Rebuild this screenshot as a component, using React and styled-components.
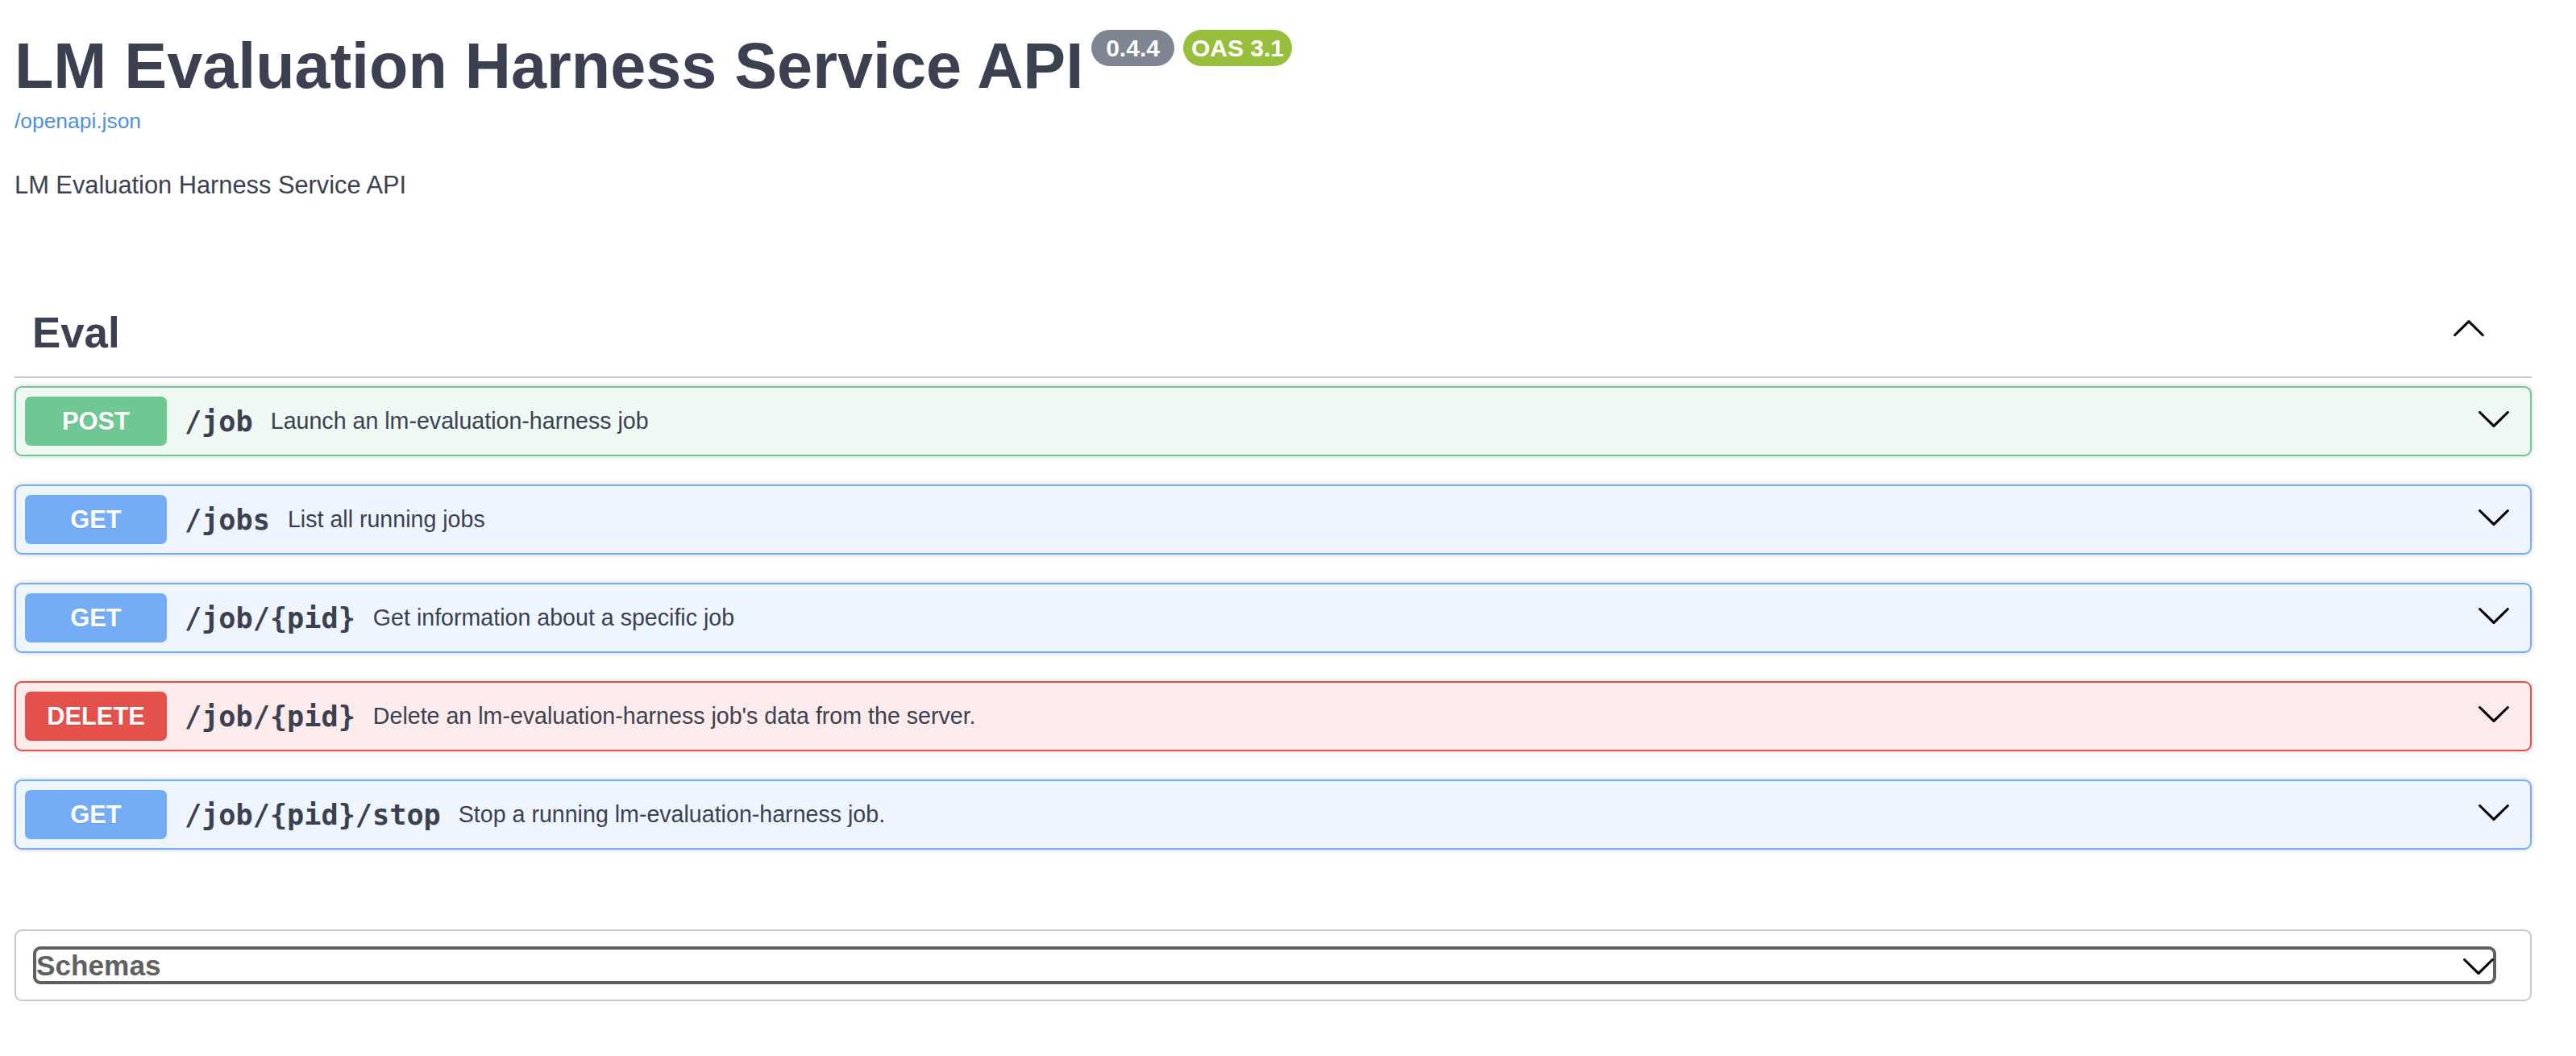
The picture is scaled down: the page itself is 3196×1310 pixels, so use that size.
import React from 'react';
import styled, { createGlobalStyle } from 'styled-components';

// page-wide reset
const GlobalStyle = createGlobalStyle`
  html, body {
    margin: 0;
    padding: 0;
    background: #ffffff;
  }
  body {
    font-family: "Liberation Sans", Arial, Helvetica, sans-serif;
    color: #3b4151;
  }
`;

const METHODS = {
  post: { badge: '#6fc894', border: '#6fc894', bg: '#eff8f3' },
  get: { badge: '#74acf6', border: '#74acf6', bg: '#eff5fe' },
  delete: { badge: '#e4504a', border: '#e4504a', bg: '#fbebea' },
};

// styling
const Page = styled.div`
  width: 3123px;
  padding: 36px 0 60px 18px;
`;
const Info = styled.div`
  display: flex;
  flex-direction: column;
  align-items: flex-start;
`;
const TitleRow = styled.div`
  display: flex;
  align-items: flex-start;
`;
const Title = styled.h2`
  margin: 0;
  font-size: 79.2px;
  line-height: 91px;
  font-weight: 700;
  color: #3b4151;
`;
const Stamp = styled.span`
  margin: 1px 0 0 ${props => props.$tone === 'oas' ? '11px' : '10px'};
  height: 45px;
  padding: 0 ${props => props.$tone === 'oas' ? '10px' : '18px'};
  border-radius: 23px;
  background: ${props => props.$tone === 'oas' ? '#97bf3b' : '#7f8593'};
  color: #ffffff;
  font-size: 30px;
  font-weight: 700;
  line-height: 45px;
`;
const SpecLink = styled.a`
  margin-top: 8px;
  font-size: 26.4px;
  line-height: 30px;
  color: #4f8fe0;
  text-decoration: none;
`;
const Description = styled.p`
  margin: 47px 0 0;
  font-size: 30.8px;
  line-height: 35px;
  color: #3b4151;
`;
const TagSection = styled.section`
  margin-top: 115px;
`;
const TagHeader = styled.div`
  display: flex;
  align-items: flex-start;
  justify-content: space-between;
  padding: 20px 56px 24px 22px;
  border-bottom: 2px solid #c4c6cb;
`;
const TagName = styled.h3`
  margin: 0;
  font-size: 52.8px;
  line-height: 61px;
  font-weight: 700;
  color: #3b4151;
`;
const OpList = styled.div`
  margin-top: 10px;
  display: flex;
  flex-direction: column;
  gap: 35px;
`;
const Opblock = styled.div`
  border: 2px solid ${props => METHODS[props.$method].border};
  background: ${props => METHODS[props.$method].bg};
  border-radius: 9px;
  box-shadow: 0 0 6px rgba(0, 0, 0, 0.19);
`;
const Summary = styled.div`
  display: flex;
  align-items: center;
  padding: 11px 23px 11px 11px;
`;
const MethodBadge = styled.span`
  flex-shrink: 0;
  width: 176px;
  height: 61px;
  display: flex;
  align-items: center;
  justify-content: center;
  border-radius: 7px;
  background: ${props => METHODS[props.$method].badge};
  color: #ffffff;
  font-size: 30.8px;
  font-weight: 700;
  text-shadow: 0 1px 0 rgba(0, 0, 0, 0.1);
`;
const Path = styled.span`
  padding: 0 22px;
  font-family: "DejaVu Sans Mono", Menlo, monospace;
  font-size: 35.2px;
  font-weight: 700;
  color: #3b4151;
  white-space: nowrap;
`;
const OpDescription = styled.span`
  flex: 1;
  font-size: 28.6px;
  color: #3b4151;
`;
const Arrow = styled.svg`
  display: block;
  flex-shrink: 0;
  width: 44px;
  height: 44px;
  fill: #000000;
  margin: ${props => props.$offset || '0'};
`;
const Models = styled.section`
  margin-top: 99px;
  padding: 19px 42px 19px 21px;
  border: 2px solid #c8c9cd;
  border-radius: 9px;
`;
const ModelsButton = styled.button`
  width: 100%;
  height: 47px;
  display: flex;
  align-items: center;
  justify-content: space-between;
  padding: 0;
  border: 4px solid #606060;
  border-radius: 9px;
  background: none;
  font-family: "Liberation Sans", Arial, sans-serif;
  font-size: 35.2px;
  font-weight: 700;
  line-height: 39px;
  color: #606060;
`;

const ArrowDown = ({ offset }) => (
  <Arrow viewBox="0 0 20 20" $offset={offset}>
    <path d="M17.418 6.109c.272-.268.709-.268.979 0s.271.701 0 .969l-7.908 7.83c-.27.268-.707.268-.979 0l-7.908-7.83c-.27-.268-.27-.701 0-.969.271-.268.709-.268.979 0L10 13.25l7.418-7.141z" />
  </Arrow>
);

const ArrowUp = () => (
  <Arrow viewBox="0 0 20 20" $offset="2px 0 0 0">
    <path d="M17.418 14.908c.272.268.709.268.979 0 .27-.268.271-.701 0-.969l-7.908-7.83c-.27-.268-.707-.268-.979 0l-7.908 7.83c-.27.268-.27.701 0 .969.271.268.709.268.979 0L10 7.767l7.418 7.141z" />
  </Arrow>
);

const operations = [
  { method: 'post', path: '/job', summary: 'Launch an lm-evaluation-harness job' },
  { method: 'get', path: '/jobs', summary: 'List all running jobs' },
  { method: 'get', path: '/job/{pid}', summary: 'Get information about a specific job' },
  { method: 'delete', path: '/job/{pid}', summary: "Delete an lm-evaluation-harness job's data from the server." },
  { method: 'get', path: '/job/{pid}/stop', summary: 'Stop a running lm-evaluation-harness job.' },
];

const App = () => (
  <>
    <GlobalStyle />
    <Page>
      <Info>
        <TitleRow>
          <Title>LM Evaluation Harness Service API</Title>
          <Stamp>0.4.4</Stamp>
          <Stamp $tone="oas">OAS 3.1</Stamp>
        </TitleRow>
        <SpecLink href="#">/openapi.json</SpecLink>
        <Description>LM Evaluation Harness Service API</Description>
      </Info>

      <TagSection>
        <TagHeader>
          <TagName>Eval</TagName>
          <ArrowUp />
        </TagHeader>
        <OpList>
          {operations.map((op, i) => (
            <Opblock key={i} $method={op.method}>
              <Summary>
                <MethodBadge $method={op.method}>{op.method.toUpperCase()}</MethodBadge>
                <Path>{op.path}</Path>
                <OpDescription>{op.summary}</OpDescription>
                <ArrowDown offset="0 0 7px 0" />
              </Summary>
            </Opblock>
          ))}
        </OpList>
      </TagSection>

      <Models>
        <ModelsButton>
          <span>Schemas</span>
          <ArrowDown offset="0 -4px 0 0" />
        </ModelsButton>
      </Models>
    </Page>
  </>
);

export default App;
